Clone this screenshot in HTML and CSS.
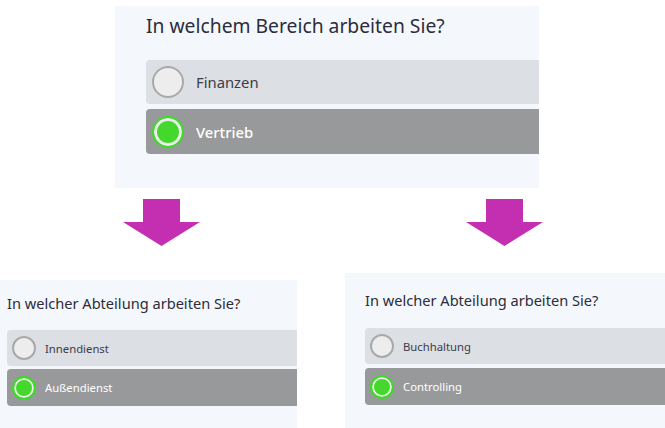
FILE: index.html
```html
<!DOCTYPE html>
<html lang="de">
<head>
    <meta charset="UTF-8">
    <meta name="viewport" content="width=device-width, initial-scale=1.0">
    <title>Umfrage Verzweigung</title>
    <link rel="stylesheet" href="styles.css">
</head>
<body>
    <div class="panel panel-main">
        <h2 class="question">In welchem Bereich arbeiten Sie?</h2>
        <div class="option">
            <span class="radio"></span>
            <span class="label">Finanzen</span>
        </div>
        <div class="option selected">
            <span class="radio"></span>
            <span class="label">Vertrieb</span>
        </div>
    </div>

    <div class="arrows">
        <svg class="arrow" width="77" height="47" viewBox="0 0 77 47">
            <polygon points="20,0 57,0 57,23 77,23 38.5,47 0,23 20,23" fill="#c42fb1"/>
        </svg>
        <svg class="arrow" width="77" height="47" viewBox="0 0 77 47">
            <polygon points="20,0 57,0 57,23 77,23 38.5,47 0,23 20,23" fill="#c42fb1"/>
        </svg>
    </div>

    <div class="branches">
        <div class="panel panel-small panel-left">
            <h3 class="question">In welcher Abteilung arbeiten Sie?</h3>
            <div class="option">
                <span class="radio"></span>
                <span class="label">Innendienst</span>
            </div>
            <div class="option selected">
                <span class="radio"></span>
                <span class="label">Außendienst</span>
            </div>
        </div>
        <div class="panel panel-small panel-right">
            <h3 class="question">In welcher Abteilung arbeiten Sie?</h3>
            <div class="option">
                <span class="radio"></span>
                <span class="label">Buchhaltung</span>
            </div>
            <div class="option selected">
                <span class="radio"></span>
                <span class="label">Controlling</span>
            </div>
        </div>
    </div>
</body>
</html>
```

FILE: styles.css
```css
body { margin: 0; background: #fff; font-family: "Noto Sans", "Open Sans", sans-serif; overflow: hidden; height: 428px; }

.panel { background: #f4f8fc; overflow: hidden; box-sizing: border-box; }
.question { margin: 0; font-weight: 400; color: #2c2c3a; }

.option { display: flex; align-items: center; background: #dcdfe3; border-radius: 4px 0 0 4px; color: #3c3c48; }
.option.selected { background: #98999b; color: #fff; }
.radio { flex: none; box-sizing: border-box; border-radius: 50%; border: 2px solid #a9a9a9; background: #ededed; }
.option.selected .radio { border-color: #3fd92a; background: #45d82c; box-shadow: inset 0 0 0 3px #ececec; }

/* top question */
.panel-main { width: 424px; height: 182px; margin: 6px 0 0 115px; padding: 7px 0 0 31px; }
.panel-main .question { font-size: 19.3px; line-height: 26px; margin-bottom: 21px; }
.panel-main .option { height: 44px; padding-left: 6px; font-size: 14.8px; }
.panel-main .option + .option { margin-top: 5px; height: 45px; }
.panel-main .option.selected .label { font-weight: 500; }
.panel-main .radio { width: 32px; height: 32px; margin-right: 12px; }

.arrows { display: flex; gap: 266px; padding-left: 123px; margin-top: 11px; height: 47px; }
.arrow { display: block; }

/* follow-up questions */
.branches { display: flex; align-items: flex-start; gap: 48px; margin-top: 27px; }
.panel-small { height: 160px; }
.panel-small .question { font-size: 14.6px; line-height: 20px; }
.panel-small .option { height: 36px; padding-left: 5px; font-size: 11.3px; }
.panel-small .option + .option { height: 37px; }
.panel-small .radio { width: 24px; height: 24px; margin-right: 9px; border-width: 2px; }
.panel-small .option.selected .radio { box-shadow: inset 0 0 0 2px #ececec; }

.panel-left { width: 297px; margin-top: 7px; padding: 13px 0 0 7px; }
.panel-left .question { margin-bottom: 17px; }
.panel-left .option + .option { margin-top: 3px; }

.panel-right { flex: 1; padding: 17px 0 0 20px; }
.panel-right .question { margin-bottom: 18px; }
.panel-right .option + .option { margin-top: 4px; }
```
